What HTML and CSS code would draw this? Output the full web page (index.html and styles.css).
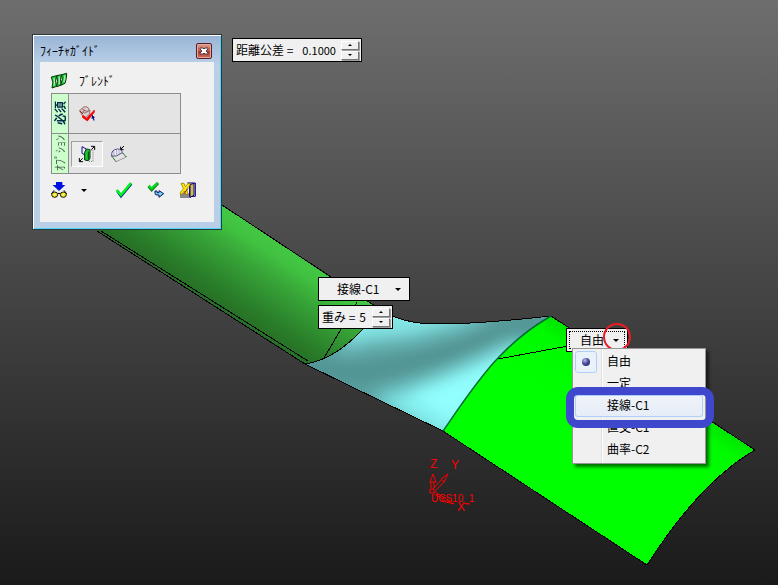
FILE: index.html
```html
<!DOCTYPE html>
<html lang="ja">
<head>
<meta charset="utf-8">
<title>ブレンド</title>
<link rel="stylesheet" href="styles.css">
</head>
<body>
<main class="viewport">
  <svg class="scene" viewBox="0 0 778 585" preserveAspectRatio="xMinYMin meet" aria-hidden="true">
    <defs>
      <linearGradient id="tube" gradientUnits="userSpaceOnUse" x1="200" y1="296" x2="248" y2="222">
        <stop offset="0" stop-color="#266e26"/>
        <stop offset=".2" stop-color="#297d29"/>
        <stop offset=".6" stop-color="#37a437"/>
        <stop offset=".85" stop-color="#41c241"/>
        <stop offset="1" stop-color="#43c843"/>
      </linearGradient>
      <linearGradient id="sheet" gradientUnits="userSpaceOnUse" x1="600" y1="430" x2="650" y2="353">
        <stop offset="0" stop-color="#00ff00"/>
        <stop offset=".55" stop-color="#00fa00"/>
        <stop offset="1" stop-color="#00c800"/>
      </linearGradient>
      <clipPath id="blendClip">
        <path d="M305 364Q334 360 363 329L378 316L392 316Q412 324 435 324Q480 324 551 316C500 345 475 385 443 431L352 387Z"/>
      </clipPath>
      <filter id="soft" x="-30%" y="-60%" width="160%" height="220%"><feGaussianBlur stdDeviation="9"/></filter>
    </defs>
    <path d="M97 230L180 178L222 205L330 277L372 304L392 316L363 329Q334 360 305 364Z" fill="url(#tube)"/>
    <path d="M222 205L372 304L392 316M97 231L305 364M101 231L308 361" class="edge"/>
    <path d="M357 302L324 358" class="edge"/>
    <g clip-path="url(#blendClip)">
      <rect x="295" y="300" width="270" height="140" fill="#5a9f9f"/>
      <g filter="url(#soft)">
        <path d="M350 290L410 290L490 312L460 326L410 338L370 342L340 350Z" fill="#84e6e6"/>
        <path d="M300 368L365 374Q425 364 475 344L540 322" fill="none" stroke="#4f8f8f" stroke-width="14"/>
        <path d="M370 398Q455 374 520 340L530 350L450 450Z" fill="#80e8e8"/>
        <path d="M405 396Q455 374 510 345L520 350L455 425Z" fill="#92ffff"/>
      </g>
    </g>
    <path d="M305 364Q334 360 363 329M305 364L352 387L443 431M392 316Q412 324 435 324Q480 324 551 316" class="edge"/>
    <path d="M551 316L755 450Q700 482 647 565L443 431C475 385 500 345 551 316Z" fill="url(#sheet)"/>
    <path d="M551 316L755 450Q700 482 647 565L443 431M498 359L568 346" class="edge"/>
    <path d="M551 316C500 345 475 385 443 431" fill="none" stroke="#046b36" stroke-width="1.5"/>
    <g fill="none" stroke="#f00">
      <path d="M430 489h4v4h-4zM431 488v-6M434 488v-6M430 482l3-8 3 8zM433 489l9-10M435 491l10-10M441 479l7-5-4 8zM435 492l10 6M434 494l9 5M444 497l10 7-12-3zM466 504h4"/>
    </g>
    <g class="axis-text">
      <text x="430" y="468">Z</text><text x="451" y="469">Y</text>
      <text class="origin" x="431" y="502">UCS10_1</text><text x="457" y="511">X</text>
    </g>
  </svg>

  <section class="guide" aria-labelledby="guide-title">
    <header class="guide-bar">
      <h1 id="guide-title">ﾌｨｰﾁｬｶﾞｲﾄﾞ</h1>
      <button class="close" aria-label="閉じる"><svg viewBox="0 0 14 14"><path d="M3 4h3l1 1 1-1h3v1L9 7l2 2v1H8L7 9l-1 1H3V9l2-2-2-2z" fill="#fff" stroke="#583a3c"/></svg></button>
    </header>
    <div class="guide-body">
      <div class="feature">
        <svg class="icon" viewBox="0 0 48 48"><g fill="#22c840" stroke="#063806" stroke-width="3"><path d="M1 12L17 8Q10 24 17 40L3 45Q9 29 1 12Z"/><path d="M17 8L32 5Q25 20 31 36L17 41Q22 25 17 8Z"/><path d="M32 5L47 1Q47 17 42 31L29 37Q37 18 32 5Z"/></g><path d="M9 15q3 10 0 23M24 11q3 10 0 23M41 7q2 9-3 21" fill="none" stroke="#a5f5a5" stroke-width="4"/></svg>
        <h2>ﾌﾞﾚﾝﾄﾞ</h2>
      </div>
      <div class="groups">
        <div class="group">
          <span class="tab tab-required"><span>必須</span></span>
          <div class="tools">
            <button class="tool" aria-label="曲線を選択"><svg class="icon" viewBox="0 0 48 48"><path d="M2 14L14 3Q25-1 31 9L25 17Q18 9 10 18Q18 25 25 17L33 13L31 26L20 34L10 29Z" fill="#d8d0d0" stroke="#936c6c" stroke-width="3"/><path d="M2 14l10 10M10 8l8 8" stroke="#a02525" stroke-width="3"/><path d="M12 28l11 9L46 12v7L25 45 10 34z" fill="#f00" stroke="#e00" stroke-width="2"/><path d="M39 26l9 9-4 1 3 7-3 1-3-7-3 3z" fill="#000080"/></svg></button>
          </div>
        </div>
        <div class="group">
          <span class="tab tab-option"><span>ｵﾌﾟｼｮﾝ</span></span>
          <div class="tools">
            <button class="tool pressed" aria-label="接続" aria-pressed="true"><svg class="icon" viewBox="0 0 48 48"><path d="M9 2L22 9V29L9 22Z" fill="#eee" stroke="#10108c" stroke-width="3"/><path d="M17 19L22 9L33 11V37L28 44L17 42Z" fill="#19c832" stroke="#052d05" stroke-width="3"/><path d="M28 17V41" stroke="#063f08" stroke-width="3"/><path d="M25 12h17v34H30" fill="none" stroke="#777" stroke-width="3" stroke-dasharray="3 3"/><path d="M36 1h11v11M46 2l-9 9M1 36v11h11M2 46l9-9" fill="none" stroke="#000" stroke-width="3"/></svg></button>
            <button class="tool" aria-label="面"><svg class="icon" viewBox="0 0 48 48"><path d="M2 30Q0 10 20 9Q34 10 34 20L16 30Z" fill="#eee" stroke="#50508d" stroke-width="3"/><path d="M9 15v15M17 11v18M24 11v14M31 16v8" stroke="#8b8bb5" stroke-width="2"/><path d="M2 30L15 47L46 33L34 20" fill="none" stroke="#777" stroke-width="2"/><path d="M2 30l13 17M35 21l11 12" stroke="#147014" stroke-width="3" stroke-dasharray="4 2"/><path d="M39 0L30 9M29 2v9h9" fill="none" stroke="#000" stroke-width="3"/></svg></button>
          </div>
        </div>
      </div>
      <div class="actions">
        <button class="action" aria-label="プレビュー"><svg class="icon" viewBox="0 0 48 48"><path d="M15 0h19v9h9L24 27 5 9h10z" fill="#0010e0"/><path d="M1 36L9 25M47 36L39 25M19 36q5-5 10 0" fill="none" stroke="#000" stroke-width="3"/><ellipse cx="11" cy="38" rx="9" ry="8" fill="#f0e818" stroke="#111" stroke-width="3"/><ellipse cx="37" cy="38" rx="9" ry="8" fill="#f0e818" stroke="#111" stroke-width="3"/><path d="M9 41l5-6M35 41l5-6" stroke="#fff" stroke-width="3"/></svg></button>
        <button class="action more" aria-label="プレビューの設定"><span class="arrow"></span></button>
        <button class="action" aria-label="OK"><svg class="icon" viewBox="0 0 48 48"><path d="M4 27l11 15 31-37" fill="none" stroke="#0510a0" stroke-width="8"/><path d="M2 24l13 15L45 3" fill="none" stroke="#00f51a" stroke-width="8"/></svg></button>
        <button class="action" aria-label="適用"><svg class="icon" viewBox="0 0 48 48"><path d="M2 13l9 10L30 3" fill="none" stroke="#147514" stroke-width="9"/><path d="M2 11l9 9L28 3" fill="none" stroke="#00df1c" stroke-width="7"/><path d="M21 27v7q0 5 6 5h6v7l14-11-14-9v6h-6v-5z" fill="#70d9ef" stroke="#10106d" stroke-width="3"/></svg></button>
        <button class="action" aria-label="キャンセル"><svg class="icon" viewBox="0 0 48 48"><path d="M0 34h32v14H0z" fill="#888"/><path d="M23 3h23v40H29V8z" fill="#eee" stroke="#000078" stroke-width="3"/><path d="M30 8l12-4v36L30 46z" fill="#d8bd47" stroke="#000078" stroke-width="3"/><path d="M3 4h9l4 10 8-10h6v6L20 20l4 17h-7l-4-10-7 10H1v-6l9-11z" fill="#ffe600" stroke="#807000" stroke-width="2"/><path d="M11 36l13-17" stroke="#a02020" stroke-width="3"/></svg></button>
      </div>
    </div>
  </section>

  <div class="field tolerance">
    <label for="tolerance">距離公差 =</label>
    <input id="tolerance" type="text" value="0.1000">
    <span class="spin"><button aria-label="公差を上げる"><i class="up"></i></button><button aria-label="公差を下げる"><i class="down"></i></button></span>
  </div>

  <div class="field choice start">
    <select aria-label="始点の連続性">
      <option>自由</option><option>一定</option><option selected>接線-C1</option><option>直交-C1</option><option>曲率-C2</option>
    </select>
    <span class="arrow"></span>
  </div>

  <div class="field weight">
    <label for="weight">重み =</label>
    <input id="weight" type="text" value="5">
    <span class="spin"><button aria-label="重みを上げる"><i class="up"></i></button><button aria-label="重みを下げる"><i class="down"></i></button></span>
  </div>

  <div class="field choice end">
    <select aria-label="終点の連続性">
      <option selected>自由</option><option>一定</option><option>接線-C1</option><option>直交-C1</option><option>曲率-C2</option>
    </select>
    <span class="arrow"></span>
    <span class="mark-circle"></span>
  </div>

  <div class="menu" role="menu">
    <button role="menuitemradio" aria-checked="true"><span class="check"><i></i></span>自由</button>
    <button role="menuitemradio" aria-checked="false">一定</button>
    <button class="hot" role="menuitemradio" aria-checked="false">接線-C1<span class="mark-box"></span></button>
    <button role="menuitemradio" aria-checked="false">直交-C1</button>
    <button role="menuitemradio" aria-checked="false">曲率-C2</button>
  </div>
</main>
</body>
</html>
```
FILE: styles.css
```css
* { box-sizing: border-box; }

body {
  margin: 0;
  color: #000;
  font: 12px/16px "Noto Sans CJK JP", sans-serif;
}

h1, h2 { margin: 0; font: inherit; }

button, input, select {
  margin: 0;
  padding: 0;
  border: 0;
  background: none;
  color: inherit;
  font: inherit;
}

.viewport {
  position: relative;
  min-height: 100vh;
  overflow: hidden;
  background: linear-gradient(#6e6e6e, #1a1a1a);
}

.scene {
  position: absolute;
  inset: 0;
  width: 100%;
  height: 100%;
}

.edge { fill: none; stroke: #000; stroke-width: 1; shape-rendering: crispEdges; }

.axis-text {
  fill: #f00;
  font: 12px "Liberation Sans", sans-serif;
}

.axis-text .origin { font-size: 10px; }

.icon { display: block; width: 16px; height: 16px; overflow: visible; }

.arrow {
  display: block;
  width: 0;
  border: 3px solid transparent;
  border-top-color: #000;
  border-bottom: 0;
}

/* Feature guide window */
.guide {
  position: absolute;
  left: 32px;
  top: 34px;
  padding: 0 7px 7px;
  border: 1px solid #2b3a42;
  background: linear-gradient(#98b4d4, #b9cfe8 28px);
  box-shadow: inset 1px 1px #fff, inset -1px -1px #4fd8f5;
}

.guide-bar {
  display: flex;
  align-items: center;
  justify-content: space-between;
  height: 27px;
  padding: 4px 2px 0 0;
}

.close {
  width: 16px;
  height: 16px;
  border: 1px solid #5a1f25;
  border-radius: 2px;
  background: linear-gradient(#dba092, #c4604f 48%, #ad3327 50%, #cb7360);
  box-shadow: inset 0 0 0 1px #dfa8a0;
}

.close svg { display: block; width: 14px; height: 14px; }

.guide-body {
  padding: 10px 18px 24px 11px;
  background: #f0f0f0;
}

.feature {
  display: flex;
  align-items: center;
  gap: 12px;
  height: 17px;
  margin-bottom: 4px;
}

.groups { width: 130px; border: 1px solid #8d8d8d; background: #e4e4e4; }
.group { display: flex; height: 39px; }
.group + .group { height: 40px; border-top: 1px solid #8d8d8d; }

.tab {
  display: flex;
  flex: none;
  align-items: center;
  justify-content: center;
  width: 17px;
  border-right: 1px solid #8d8d8d;
  background: #ccffcc;
  overflow: hidden;
}

.tab span {
  writing-mode: vertical-rl;
  text-orientation: sideways;
  transform: rotate(180deg);
  white-space: nowrap;
}

.tab-required { color: #002b4c; font-weight: 700; }
.tab-option { color: #4c6450; }

.tools { display: flex; align-items: center; padding-left: 2px; }

.tool {
  display: grid;
  place-items: center;
  width: 32px;
  height: 26px;
  border: 1px solid transparent;
}

.pressed {
  border-color: #a0a0a0 #fff #fff #a0a0a0;
  background: #ececec;
}

.actions { display: flex; gap: 16px; margin-top: 8px; width: 145px; }
.action { width: 16px; height: 16px; }
.more { display: grid; place-items: center; margin: 0 8px 0 -7px; }

/* Floating parameter fields */
.field {
  position: absolute;
  display: flex;
  align-items: center;
  height: 24px;
  padding: 0 2px 0 3px;
  border: 1px solid #000;
  background: #f0f0f0;
  white-space: nowrap;
}

.tolerance { left: 232px; top: 38px; }
.tolerance input { width: 39px; margin-left: 9px; font-size: 11px; }

.weight { left: 318px; top: 305px; }
.weight input { width: 13px; margin-left: 4px; }

.spin { display: flex; flex-direction: column; gap: 1px; }

.spin button {
  display: grid;
  place-items: center;
  width: 18px;
  height: 9px;
  border: 1px solid;
  border-color: #fff #777 #777 #fff;
  background: #f0f0f0;
  box-shadow: 1px 1px #a0a0a0;
}

.up, .down { width: 0; border: 2px solid transparent; }
.up { border-top: 0; border-bottom-color: #000; }
.down { border-bottom: 0; border-top-color: #000; }

.choice select {
  width: 100%;
  height: 100%;
  appearance: none;
  outline: 0;
}

.choice .arrow { position: absolute; right: 8px; top: 10px; }

.start { left: 318px; top: 277px; width: 92px; }
.start select { padding-left: 15px; }

.end { left: 566px; top: 328px; width: 62px; padding: 2px; }
.end select { padding-left: 10px; border: 1px dotted #000; }

.mark-circle {
  position: absolute;
  right: -4px;
  top: -6px;
  width: 28px;
  height: 28px;
  border: 2px solid #ed1c24;
  border-radius: 50%;
}

.menu {
  position: absolute;
  left: 572px;
  top: 348px;
  width: 134px;
  padding: 2px;
  border: 1px solid #979797;
  background: linear-gradient(90deg, transparent 28px, #e0e0e0 28px, #e0e0e0 29px, #fff 29px, #fff 30px, transparent 30px), #f0f0f0;
  box-shadow: 3px 3px 3px rgba(0, 0, 0, .55);
}

.menu button {
  position: relative;
  display: block;
  width: 100%;
  height: 22px;
  padding: 0 0 2px 32px;
  text-align: left;
}

.menu .hot {
  z-index: 1;
  border-radius: 3px;
  background: linear-gradient(#f0f3f8, #e5edf7);
  box-shadow: inset 0 0 0 1px #aecff7;
}

.check {
  position: absolute;
  left: 0;
  top: 0;
  display: grid;
  place-items: center;
  width: 22px;
  height: 22px;
  border: 1px solid #aecff7;
  border-radius: 3px;
  background: #e9f1fb;
}

.check i {
  width: 8px;
  height: 8px;
  border-radius: 50%;
  background: radial-gradient(circle at 35% 30%, #b8b8ec, #4b4b9c 45%, #1c1c55);
}

.mark-box {
  position: absolute;
  inset: -8px -11px -11px -9px;
  border: 8px solid #3f48cc;
  border-radius: 12px;
}
```
